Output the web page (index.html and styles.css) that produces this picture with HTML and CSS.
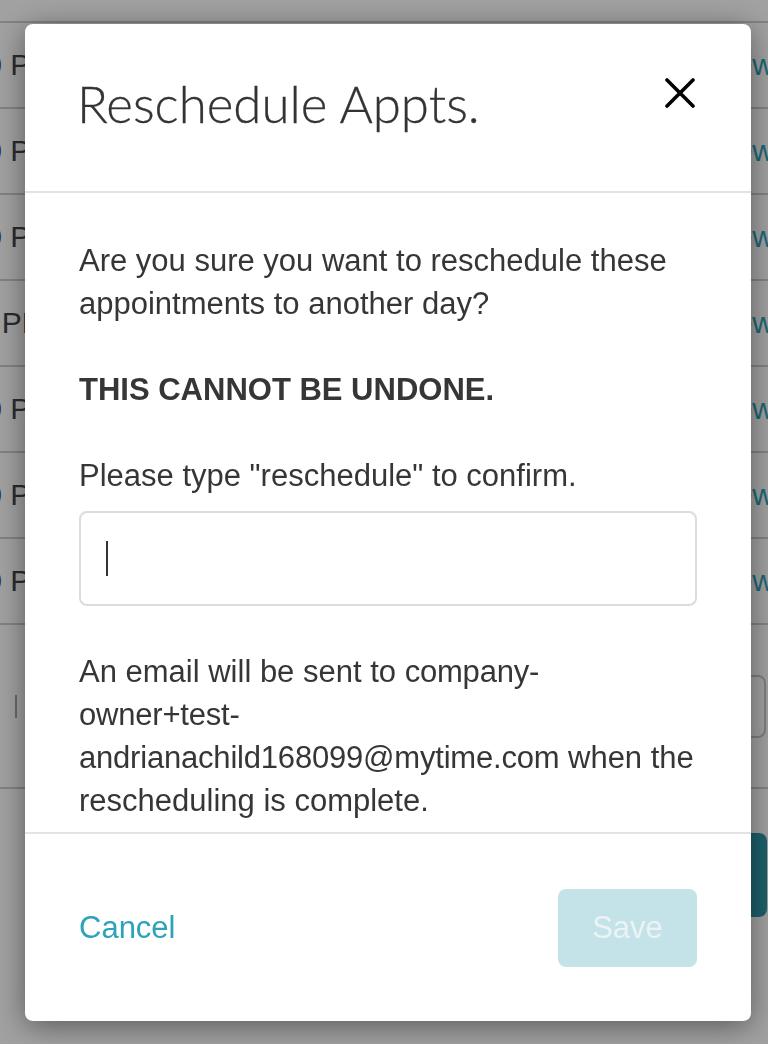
FILE: index.html
```html
<!DOCTYPE html>
<html lang="en">

<head>
    <meta charset="UTF-8">
    <meta name="viewport" content="width=device-width, initial-scale=1.0">
    <title>Reschedule Appts.</title>
    <link rel="stylesheet" href="styles.css">
</head>

<body>
    <div class="page">
        <div class="topbar"></div>

        <div class="appt"><span class="appt-time">12:00 PM</span><a class="appt-link">View</a></div>
        <div class="appt"><span class="appt-time">12:30 PM</span><a class="appt-link">View</a></div>
        <div class="appt"><span class="appt-time">12:00 PM</span><a class="appt-link">View</a></div>
        <div class="appt"><span class="appt-time">1:00 PM</span><a class="appt-link">View</a></div>
        <div class="appt"><span class="appt-time">12:00 PM</span><a class="appt-link">View</a></div>
        <div class="appt"><span class="appt-time">12:00 PM</span><a class="appt-link">View</a></div>
        <div class="appt"><span class="appt-time">12:00 PM</span><a class="appt-link">View</a></div>

        <div class="filter">
            <span class="filter-caret"></span>
            <div class="filter-input"></div>
        </div>

        <div class="actions">
            <button class="actions-btn"></button>
        </div>
    </div>

    <div class="backdrop"></div>

    <div class="modal">
        <div class="modal-header">
            <h1 class="modal-title">Reschedule Appts.</h1>
            <button class="modal-close" aria-label="Close">
                <svg width="30" height="30" viewBox="0 0 30 30">
                    <path d="M2 2 L28 28 M28 2 L2 28" stroke="#000" stroke-width="3.6" stroke-linecap="round" fill="none" />
                </svg>
            </button>
        </div>

        <div class="modal-body">
            <p>Are you sure you want to reschedule these appointments to another day?</p>
            <p class="modal-warn">THIS CANNOT BE UNDONE.</p>
            <p class="modal-prompt">Please type "reschedule" to confirm.</p>
            <label class="field">
                <span class="field-caret"></span>
                <input type="text" name="confirm">
            </label>
            <p class="modal-note">An email will be sent to <span class="email">company-owner+test-andrianachild168099@mytime.com</span> when the rescheduling is complete.</p>
        </div>

        <div class="modal-footer">
            <button class="btn-link">Cancel</button>
            <button class="btn-save" disabled>Save</button>
        </div>
    </div>
</body>

</html>
```

FILE: styles.css
```css
* {
    box-sizing: border-box;
}

html,
body {
    margin: 0;
    height: 100%;
    overflow: hidden;
}

body {
    font-family: "Liberation Sans", Arial, Helvetica, sans-serif;
    background: #fff;
    color: #444;
}

/* page behind the dialog */

.page {
    width: 880px;
    margin-left: -89px;
}

.topbar {
    height: 23px;
    border-bottom: 2px solid #cfcfcf;
}

.appt {
    display: flex;
    align-items: center;
    justify-content: space-between;
    height: 86px;
    padding-right: 17px;
    border-bottom: 2px solid #cfcfcf;
    font-size: 30px;
}

.appt-time {
    width: 160px;
    text-align: center;
    color: #444;
}

.appt-link {
    color: #2ba3b8;
}

.filter {
    display: flex;
    align-items: center;
    justify-content: space-between;
    height: 164px;
    padding: 0 25px 0 104px;
    border-bottom: 2px solid #cfcfcf;
}

.filter-caret {
    width: 2px;
    height: 23px;
    background: #a8a8a8;
}

.filter-input {
    width: 320px;
    height: 63px;
    border: 2px solid #c9c9c9;
    border-radius: 8px;
}

.actions {
    display: flex;
    justify-content: flex-end;
    padding: 44px 24px 0 0;
}

.actions-btn {
    width: 220px;
    height: 84px;
    border: none;
    border-radius: 8px;
    background: #2f98ab;
}

.backdrop {
    position: fixed;
    top: 0;
    right: 0;
    bottom: 0;
    left: 0;
    background: rgba(0, 0, 0, 0.37);
}

/* dialog */

.modal {
    position: fixed;
    top: 24px;
    left: 25px;
    width: 726px;
    display: flex;
    flex-direction: column;
    background: #fff;
    border-radius: 8px;
    box-shadow: 0 5px 30px rgba(0, 0, 0, 0.45);
}

.modal-header {
    display: flex;
    align-items: center;
    justify-content: space-between;
    height: 169px;
    padding: 0 56px 0 52px;
    border-bottom: 2px solid #e3e3e3;
}

.modal-title {
    margin: 0 0 8px;
    font: 300 51px/1.2 Lato, "Open Sans", sans-serif;
    color: #333;
    -webkit-text-stroke: 0.3px #333;
}

.modal-close {
    width: 30px;
    height: 30px;
    margin: 0 0 30px;
    padding: 0;
    border: none;
    background: none;
    cursor: pointer;
}

.modal-body {
    padding: 46px 54px 10px;
    font-size: 31px;
    line-height: 43px;
    color: #363636;
}

.modal-body p {
    margin: 0 0 43px;
}

.modal-body .modal-prompt {
    margin-bottom: 14px;
}

.modal-body .modal-note {
    margin: 0;
}

.modal-warn {
    font-weight: bold;
}

.email {
    letter-spacing: -0.2px;
}

.field {
    display: flex;
    align-items: center;
    height: 95px;
    margin-bottom: 44px;
    padding: 0 25px;
    border: 2px solid #dadde0;
    border-radius: 8px;
}

.field-caret {
    flex: none;
    width: 2px;
    height: 35px;
    background: #333;
}

.field input {
    flex: 1;
    min-width: 0;
    padding: 0;
    border: none;
    outline: none;
    background: transparent;
    font: inherit;
}

.modal-footer {
    display: flex;
    align-items: center;
    justify-content: space-between;
    height: 189px;
    padding: 0 54px;
    border-top: 2px solid #e3e3e3;
}

.btn-link {
    padding: 0;
    border: none;
    background: none;
    font: 31px "Liberation Sans", Arial, sans-serif;
    color: #2ba3b8;
    cursor: pointer;
}

.btn-save {
    width: 139px;
    height: 78px;
    border: none;
    border-radius: 8px;
    background: #c4e3e8;
    font: 31px "Liberation Sans", Arial, sans-serif;
    color: #edf3f5;
}
```
